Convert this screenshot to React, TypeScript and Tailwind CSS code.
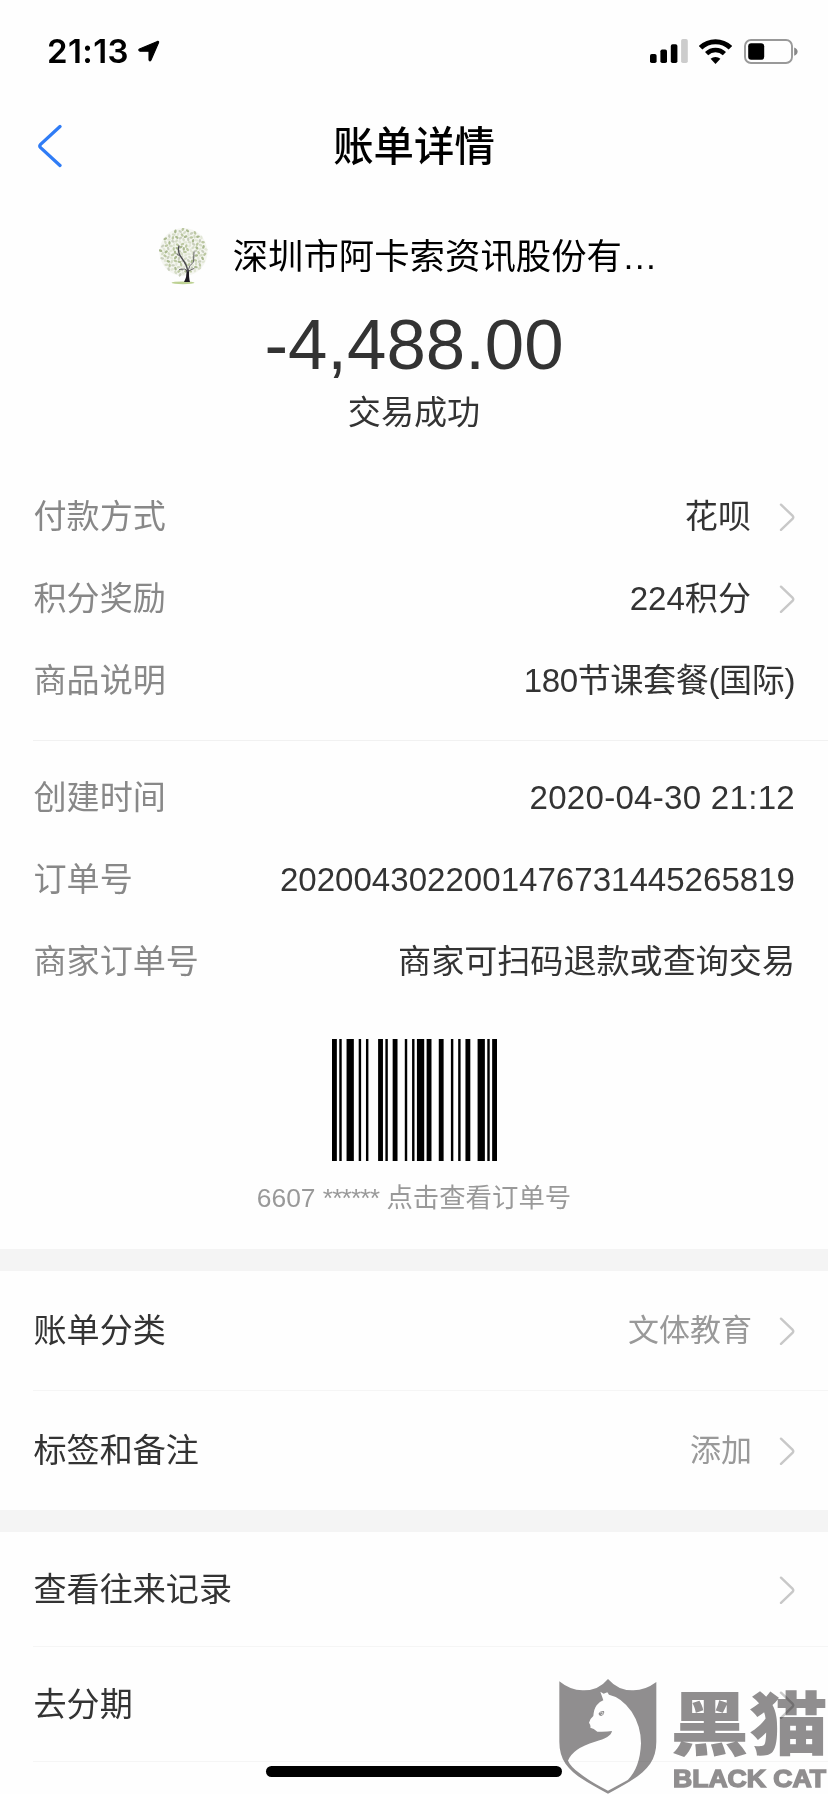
import type { ReactNode } from 'react'
import clsx from 'clsx'

const payRows = [
  { label: '付款方式', value: '花呗', link: true },
  { label: '积分奖励', value: '224积分', link: true },
  { label: '商品说明', value: '180节课套餐(国际)', link: false, tight: true },
]

const orderRows = [
  { label: '创建时间', value: '2020-04-30 21:12', wide: true },
  { label: '订单号', value: '2020043022001476731445265819' },
  { label: '商家订单号', value: '商家可扫码退款或查询交易' },
]

// Code 128 module widths, bar and space alternating
const barcode = '2112321214211223121131232312122331112'

// leaf positions on a sunflower spiral, so the crown fills evenly
const leaves = Array.from({ length: 130 }, (_, i) => {
  const r = 23.2 * Math.sqrt((i + 0.5) / 130)
  const a = i * 2.39996
  return {
    x: 24.5 + r * Math.cos(a),
    y: 24 + r * Math.sin(a),
    turn: (i * 47) % 180,
    fill: ['#bcc8a2', '#d5dcc6', '#aab98f', '#e2e7d6', '#c9cfbd'][i % 5],
  }
})

function StatusBar() {
  return (
    <div className="flex h-[102px] items-center justify-between pr-[30px] pl-[47px]">
      <div className="flex items-center">
        <span className="w-[91px] font-[Inter] text-[33px] leading-none font-semibold tracking-[0.4px] text-black">
          21:13
        </span>
        <svg className="h-[22px] w-[22px]" viewBox="0 0 22 22">
          <path
            d="M1.5 9 19.4 1.4Q21.2.9 20.5 2.8L12.9 20.2Q11.8 21.6 11 20V11.2H2Q-.2 10.2 1.5 9Z"
            stroke="#000"
            strokeWidth="1.1"
            strokeLinejoin="round"
          />
        </svg>
      </div>
      <div className="flex items-center">
        <svg className="h-6 w-[38px]" viewBox="0 0 38 24">
          <rect x="0" y="15" width="6.6" height="9" rx="1.8" />
          <rect x="10.4" y="10.4" width="6.6" height="13.6" rx="1.8" />
          <rect x="20.8" y="5.2" width="6.6" height="18.8" rx="1.8" />
          <rect x="31.1" y="0" width="6.7" height="24" rx="1.8" fill="#ccc" />
        </svg>
        <svg className="ml-[11px] h-[25px] w-[33px]" viewBox="0 0 33 25">
          <path d="M1.6 8.8A21.5 21.5 0 0 1 31.4 8.8" fill="none" stroke="#000" strokeWidth="5" />
          <path d="M7.6 14.6A12.8 12.8 0 0 1 25.4 14.6" fill="none" stroke="#000" strokeWidth="4.6" />
          <path d="M11.6 19.8A7.3 7.3 0 0 1 21.4 19.8L16.5 25Z" />
        </svg>
        <svg className="ml-[12px] h-[25px] w-[54px]" viewBox="0 0 54 25">
          <rect x="1" y="1" width="47" height="23" rx="6" fill="none" stroke="#999" strokeWidth="1.9" />
          <rect x="4.2" y="4.2" width="16" height="16.6" rx="3" />
          <path d="M50.2 8.4Q53.6 9.6 53.6 12.6T50.2 16.8Z" fill="#888" />
        </svg>
      </div>
    </div>
  )
}

function Chevron() {
  return (
    <svg className="h-7 w-[16px] shrink-0" viewBox="0 0 16 28" fill="none">
      <path d="M2 1.7 13.7 12.9Q14.8 14.3 13.7 15.7L2 26.8" stroke="#c8c8c8" strokeWidth="2.4" strokeLinecap="round" />
    </svg>
  )
}

function TreeAvatar() {
  return (
    <svg className="mt-[2px] h-[58px] w-[50px]" viewBox="0 0 50 58">
      <circle cx="24.5" cy="24" r="24" fill="#f5f6f1" />
      {leaves.map((l, i) => (
        <ellipse
          key={i}
          cx={l.x}
          cy={l.y}
          rx="1.9"
          ry="1.2"
          fill={l.fill}
          transform={`rotate(${l.turn} ${l.x} ${l.y})`}
        />
      ))}
      <ellipse cx="24" cy="54.8" rx="11.5" ry="1.4" fill="#bdd193" />
      <path d="M25 54Q28 49 27.4 42L30 42Q29.8 50 31 54Z" fill="#1d1a20" />
      <g fill="none" stroke="#4a4850" strokeLinecap="round">
        <path strokeWidth="1.3" d="M28.7 43Q28 37 23 30.5T20 18" />
        <path strokeWidth="0.8" d="M22.3 29 18 26M29 43Q30 37 34.5 34L35 24M28 43 26 41 20.5 41.5M29.5 43 35 40.5" />
      </g>
    </svg>
  )
}

function Barcode() {
  let x = 0
  return (
    <svg className="h-[122px] w-[165px]" viewBox="0 0 68 122" preserveAspectRatio="none">
      {barcode.split('').map((m, i) => {
        const w = Number(m)
        const at = x
        x += w
        return i % 2 === 0 ? <rect key={i} x={at} y="0" width={w} height="122" /> : null
      })}
    </svg>
  )
}

type DetailRowProps = { label: string; value: string; link?: boolean; tight?: boolean; wide?: boolean }

function DetailRow({ label, value, link, tight, wide }: DetailRowProps) {
  return (
    <div className="flex h-[82px] items-center pr-[33px] pl-[33.5px]">
      <span className="pb-px text-[#888]">{label}</span>
      <span
        className={clsx(
          'ml-auto pb-px',
          link && 'mr-[28px]',
          tight && 'tracking-[-0.4px]',
          wide && 'tracking-[0.27px]',
        )}
      >
        {value}
      </span>
      {link && <Chevron />}
    </div>
  )
}

function MenuRow({ className, label, children }: { className: string; label: string; children?: ReactNode }) {
  return (
    <div className={clsx('ml-[33.5px] flex items-center pr-[33px]', className)}>
      <span>{label}</span>
      <span className="mr-[27px] ml-auto text-[31px] text-[#999]">{children}</span>
      <Chevron />
    </div>
  )
}

function BlackCatMark() {
  return (
    <svg
      className="absolute right-0 bottom-0 h-[134px] w-[288px] mix-blend-multiply"
      viewBox="0 0 864 402"
      fill="#918f90"
    >
      <path d="M58 64Q92 92 130 91Q175 92 204 57Q235 92 278 91Q314 92 349 66V245C349 320 300 350 204 401C108 350 58 320 58 245Z" />
      <path
        d="M181 95 191 101 202 97 207 104Q245 112 275 155Q303 198 303 250Q300 325 262 361L204 392Q150 365 118 339Q92 320 84 302Q98 265 165 245Q213 233 216 213Q200 216 172 215Q161 205 151 203Q153 196 147 188Q150 176 160 168Q162 146 170 136Q176 126 190 121Z"
        fill="#fff"
      />
      <path d="M176 160Q181 152 192 153Q195 163 184 168Q176 168 176 160Z" />
      <path d="M181 157Q188 154 190 158T184 165Z" fill="#fff" />
      <circle cx="185" cy="160" r="3" />
      <text
        x="391"
        y="269"
        fontFamily="'Liberation Sans', 'Noto Sans CJK SC', sans-serif"
        fontSize="208"
        fontWeight="900"
        textLength="473"
        lengthAdjust="spacingAndGlyphs"
      >
        黑猫
      </text>
      <text
        x="399"
        y="380"
        fontFamily="'Liberation Sans', sans-serif"
        fontSize="69"
        fontWeight="700"
        stroke="#918f90"
        strokeWidth="4"
        textLength="459"
        lengthAdjust="spacingAndGlyphs"
      >
        BLACK CAT
      </text>
    </svg>
  )
}

export default function App() {
  return (
    <div className="relative h-[1794px] w-[828px] overflow-hidden bg-[#fefefe] font-['Liberation_Sans','Noto_Sans_CJK_SC',sans-serif] text-[33.1px] leading-none whitespace-nowrap text-[#333]">
      <StatusBar />

      <header className="grid h-[88px] grid-cols-[1fr_auto_1fr] items-center px-[37px]">
        <svg className="h-[44px] w-[26px]" viewBox="0 0 26 44" fill="none">
          <path d="M23 2.5 3.6 20.3Q2 22 3.6 23.7L23 41.5" stroke="#2f7cf6" strokeWidth="3.3" strokeLinecap="round" />
        </svg>
        <h1 className="pt-[3px] text-[40.4px] font-medium text-black">账单详情</h1>
      </header>

      <section className="flex h-[286px] flex-col items-center pt-[37px]">
        <div className="mr-[12px] flex h-[58px] items-center">
          <TreeAvatar />
          <span className="ml-[24px] pt-[4px] text-[35.4px] text-black">深圳市阿卡索资讯股份有…</span>
        </div>
        <p className="mt-[25px] text-[70.8px]">-4,488.00</p>
        <p className="mt-[15px]">交易成功</p>
      </section>

      <section>
        {payRows.map((row) => (
          <DetailRow key={row.label} {...row} />
        ))}
      </section>
      <div className="mt-[18px] ml-[33px] h-px bg-[#f1f1f1]" />
      <section className="mt-[16px]">
        {orderRows.map((row) => (
          <DetailRow key={row.label} {...row} />
        ))}
      </section>

      <section className="flex h-[246px] flex-col items-center pt-[36px]">
        <Barcode />
        <p className="mt-[24px] text-[26.4px] text-[#999]">
          6607 <span className="tracking-[-0.9px]">******</span> 点击查看订单号
        </p>
      </section>

      <div className="h-[22px] bg-[#f4f4f4]" />
      <MenuRow className="h-[119px]" label="账单分类">
        文体教育
      </MenuRow>
      <div className="ml-[33px] h-px bg-[#f5f5f5]" />
      <MenuRow className="h-[119px]" label="标签和备注">
        添加
      </MenuRow>
      <div className="h-[22px] bg-[#f4f4f4]" />
      <MenuRow className="h-[114px] pt-px" label="查看往来记录" />
      <div className="ml-[33px] h-px bg-[#f5f5f5]" />
      <MenuRow className="h-[114px] pt-px" label="去分期" />
      <div className="ml-[33px] h-px bg-[#f5f5f5]" />

      {/* home indicator */}
      <div className="absolute bottom-[17px] left-[266px] h-[11px] w-[296px] rounded-full bg-black" />
      <BlackCatMark />
    </div>
  )
}
